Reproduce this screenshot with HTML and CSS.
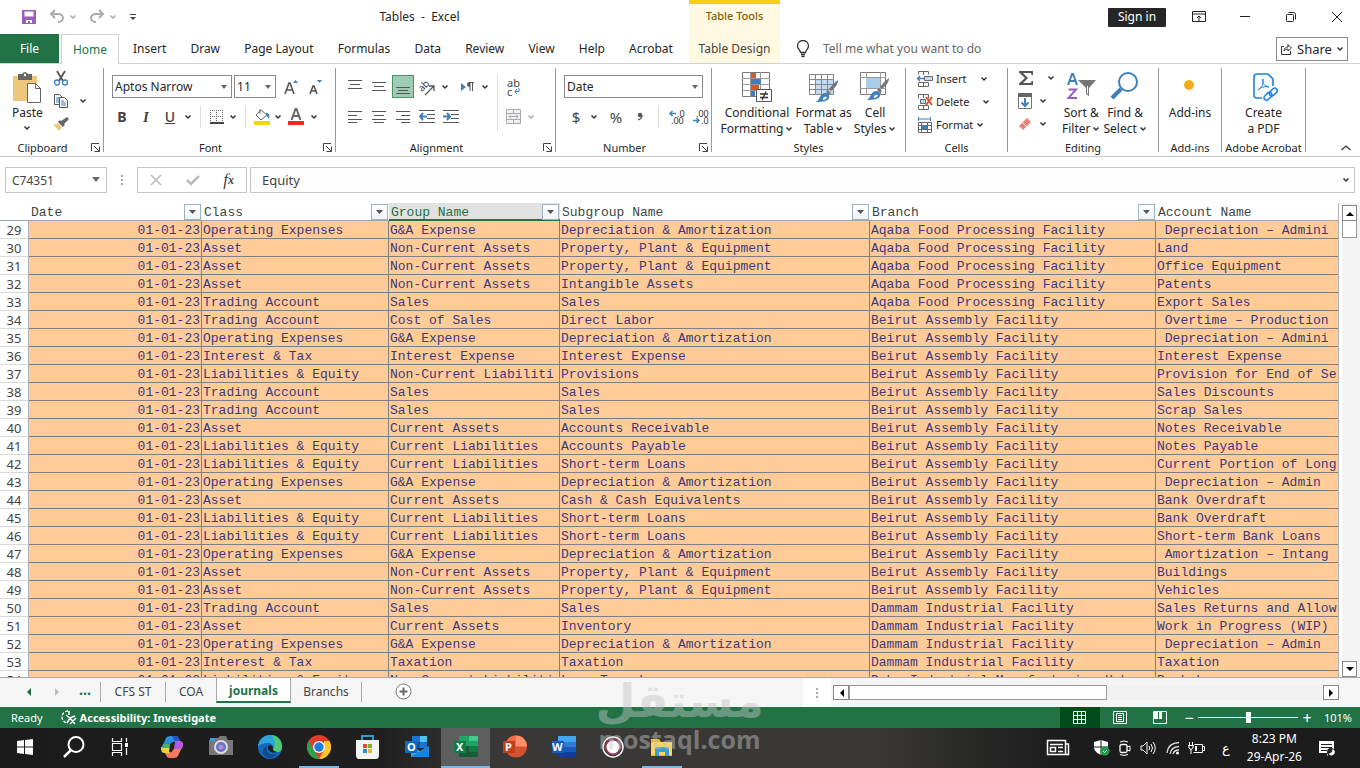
FILE: index.html
```html
<!DOCTYPE html>
<html lang="en">
<head>
<meta charset="utf-8">
<title>Tables - Excel</title>
<link rel="stylesheet" href="styles.css">
</head>
<body>
<svg class="defs" aria-hidden="true">
  <symbol id="chev" viewBox="0 0 8 8"><path d="M1.5 2.5 4 5l2.500-2.500" fill="none" stroke="currentColor" stroke-width="1.500"/></symbol>
  <symbol id="launch" viewBox="0 0 9 9"><path d="M.5 8V.5H8M3 3l5 5M8.500 3.500v5h-5" fill="none" stroke="#444"/></symbol>
  <symbol id="brush" viewBox="0 0 24 24"><path d="M23 1c0 4-3 8-7 11l-2-2C17 6 20 3 23 1z" fill="#777"/><path d="m13 11 3 3-2 2-3-3z" fill="#777"/><path d="M10 14c3 0 5 2 4 5-1 3-6 4-13 4 4-2 3-8 9-9z" fill="#3f7fbe"/><path d="M8 19c2-2 4-1 4-1s-1 3-4 3z" fill="#fff"/></symbol>
</svg>

<header class="top">
  <div class="title-left">
    <div class="qat">
      <button class="btn" aria-label="Save"><svg width="16" height="16"><path d="M1 1h14v14H1z" fill="#9a5fb9"/><path d="M3.500 2.500h9v5h-9zM5 11h6v3H5z" fill="#fff"/><path d="M7 12h2v2H7z" fill="#9a5fb9"/></svg></button>
      <button class="btn dim" aria-label="Undo"><svg width="16" height="16"><path d="M6 1 2 5l4 4M2 5h7c3 0 5 2 5 4s-2 4-5 4" fill="none" stroke="#aaa" stroke-width="2"/></svg><svg class="chev"><use href="#chev"/></svg></button>
      <button class="btn dim" aria-label="Redo"><svg width="16" height="16"><path d="m10 1 4 4-4 4M14 5H7C4 5 2 7 2 9s2 4 5 4" fill="none" stroke="#aaa" stroke-width="2"/></svg><svg class="chev"><use href="#chev"/></svg></button>
      <button class="btn" aria-label="Customize"><svg width="8" height="8"><path d="M1 1.500h6" stroke="#444"/><path d="M1 4h6L4 7z" fill="#444"/></svg></button>
    </div>
    <h1 class="doc-title">Tables&nbsp; -&nbsp; Excel</h1>
  </div>
  <div class="ctx-title">Table Tools</div>
  <div class="win">
    <button class="signin">Sign in</button>
    <button class="btn win-btn" aria-label="Ribbon options"><svg width="14" height="12"><path d="M.5.500h13v10H.5zM.5 3h13M7 10V5M5 7l2-2 2 2" fill="none" stroke="#222"/></svg></button>
    <button class="btn win-btn" aria-label="Minimize"><svg width="12" height="12"><path d="M1 5.500h10" stroke="#222"/></svg></button>
    <button class="btn win-btn" aria-label="Restore"><svg width="12" height="12"><rect x="1.500" y="3.500" width="7" height="7" rx="1" fill="none" stroke="#222"/><path d="M3.500 1.500h5q2 0 2 2v5" fill="none" stroke="#222"/></svg></button>
    <button class="btn win-btn" aria-label="Close"><svg width="12" height="12"><path d="m1 1 10 10M11 1 1 11" stroke="#222"/></svg></button>
  </div>
  <nav class="tabs">
    <a class="file" href="#file">File</a>
    <a class="home" href="#home">Home</a>
    <div class="tab-list"><a href="#insert">Insert</a><a href="#draw">Draw</a><a href="#layout">Page Layout</a><a href="#formulas">Formulas</a><a href="#data">Data</a><a href="#review">Review</a><a href="#view">View</a><a href="#help">Help</a><a href="#acrobat">Acrobat</a></div>
  </nav>
  <a class="ctx-tab" href="#design">Table Design</a>
  <div class="tell">
    <svg width="14" height="18"><path d="M4.500 12.500C4.500 10 1.500 9 1.500 6a5.500 5.500 0 0 1 11 0c0 3-3 4-3 6.500zM5 14.500h4M5.500 16.500h3" fill="none" stroke="#333" stroke-width="1.300"/></svg>
    <input class="tell-input" type="text" aria-label="Tell me" placeholder="Tell me what you want to do">
    <button class="share"><svg width="13" height="12"><path d="M4 3.500H1.500v8h9V8M4 8c0-3 2-4 4-4V1.500L11.500 5 8 8V6C6 6 5 7 4 8z" fill="none" stroke="#333"/></svg>Share<svg class="chev"><use href="#chev"/></svg></button>
  </div>
</header>

<main class="ribbon">
  <section class="group g-clip">
    <div class="body clip-body">
      <button class="big"><svg width="30" height="32"><path d="M1 4h24v25H1z" fill="#eec77c"/><path d="M6 2h4c1-2.500 5-2.500 6 0h4v6H6z" fill="#666"/><circle cx="13" cy="3" r="1.200" fill="#fff"/><path d="M15.500 11.500h8l5 5v14h-13z" fill="#fff" stroke="#666"/><path d="M23.500 11.500v5h5" fill="none" stroke="#666"/></svg><span>Paste</span><svg class="chev"><use href="#chev"/></svg></button>
      <div class="stack">
        <button class="btn" aria-label="Cut"><svg width="16" height="16"><path d="m4 1 6 10M12 1 6 11" stroke="#555" stroke-width="1.800"/><circle cx="4" cy="12.500" r="2.500" fill="none" stroke="#3f7fbe" stroke-width="1.300"/><circle cx="12" cy="12.500" r="2.500" fill="none" stroke="#3f7fbe" stroke-width="1.300"/></svg></button>
        <button class="btn copy" aria-label="Copy"><svg width="16" height="16"><path d="M1.500 1.500h5l3 3v7h-8z" fill="#fff" stroke="#555"/><path d="M3 5h4M3 7h4M3 9h3" stroke="#3f7fbe"/><path d="M6.500 4.500h5l3 3v7h-8z" fill="#fff" stroke="#555"/><path d="M8 8h3M8 10h5M8 12h5" stroke="#3f7fbe"/></svg><svg class="chev"><use href="#chev"/></svg></button>
        <button class="btn" aria-label="Format painter"><svg width="16" height="16"><path d="m14 1 2 2-5 5-3-3zM7 4l5 5-2 2-5-5z" fill="#666"/><path d="m5 7 4 4-3 4L0 8c2 1 3 0 5-1z" fill="#eec77c"/></svg></button>
      </div>
    </div>
    <div class="label">Clipboard<svg class="launch"><use href="#launch"/></svg></div>
  </section>

  <section class="group g-font">
    <div class="body">
      <div class="row">
        <span class="combo c-face"><select aria-label="Font"><option>Aptos Narrow</option></select></span>
        <span class="combo c-size"><select aria-label="Font size"><option>11</option></select></span>
        <button class="btn w24" aria-label="Grow font"><svg width="14" height="16"><path d="m1 15 4-11h1l4 11M2.500 11h6" fill="none" stroke="#555" stroke-width="1.600"/><path d="m9 4 2.500-3L14 4z" fill="#3f7fbe"/></svg></button>
        <button class="btn w24" aria-label="Shrink font"><svg width="14" height="16"><path d="m2 15 3-8h1l3 8M3 12h5" fill="none" stroke="#555" stroke-width="1.600"/><path d="m9 1 2.500 3L14 1z" fill="#3f7fbe"/></svg></button>
      </div>
      <div class="row r2">
        <button class="btn w24 fmt"><b>B</b></button>
        <button class="btn w24 fmt serif"><i>I</i></button>
        <button class="btn w24 fmt strong-u"><u>U</u></button>
        <svg class="chev"><use href="#chev"/></svg><span class="sep"></span>
        <button class="btn w20" aria-label="Borders"><svg width="14" height="14"><path d="M.5 0v13M6.500 0v13M12.500 0v13M0 .5h13M0 6.500h13" stroke="#666" stroke-dasharray="1 1"/><path d="M0 13h14" stroke="#444" stroke-width="2"/></svg></button>
        <svg class="chev"><use href="#chev"/></svg><span class="sep"></span>
        <button class="btn w20" aria-label="Fill color"><svg width="17" height="17"><path d="m7 2 6 5-6 5-5-5z" fill="#fff" stroke="#666"/><path d="M6 6V1" stroke="#666"/><path d="M12 5c3 0 4 2 3 6-1-2-2-2-3-4z" fill="#3f7fbe"/><path d="M0 13h16v4H0z" fill="#f7cf17"/></svg></button>
        <svg class="chev"><use href="#chev"/></svg>
        <button class="btn w24" aria-label="Font color"><svg width="16" height="17"><path d="m3.500 12 4-11h1l4 11M5 8h6" fill="none" stroke="#666" stroke-width="2"/><path d="M0 13h16v4H0z" fill="#ee2a1b"/></svg></button>
        <svg class="chev"><use href="#chev"/></svg>
      </div>
    </div>
    <div class="label">Font<svg class="launch"><use href="#launch"/></svg></div>
  </section>

  <section class="group g-align">
    <div class="body align-body">
      <div class="align-left">
        <div class="row">
          <button class="btn w24" aria-label="Top align"><svg width="14" height="16"><path d="M0 1.500h14M2 5.500h10M0 9.500h14" stroke="#555"/></svg></button>
          <button class="btn w24" aria-label="Middle align"><svg width="14" height="16"><path d="M0 3.500h14M2 7.500h10M0 11.500h14" stroke="#555"/></svg></button>
          <button class="btn on" aria-label="Bottom align"><svg width="14" height="16"><path d="M0 8.500h14M2 11.500h10M0 14.500h14" stroke="#555"/></svg></button>
          <button class="btn w24" aria-label="Orientation"><svg width="20" height="18"><text x="1" y="11" class="ic-ab" transform="rotate(-45 7 8)">ab</text><path d="M8 17 17 8M12 8h5v5" fill="none" stroke="#555" stroke-width="1.300"/></svg></button>
          <svg class="chev"><use href="#chev"/></svg>
          <button class="btn w24 rtl" aria-label="Text direction"><svg width="14" height="12"><path d="m1 2 5 4-5 4z" fill="#3f7fbe"/><path d="M10 1v9M12.500 1v9M14 1.500H9" stroke="#555" fill="none"/><path d="M10 1c-4 0-4 5 0 5z" fill="#555"/></svg></button>
          <svg class="chev"><use href="#chev"/></svg>
        </div>
        <div class="row r2">
          <button class="btn w24" aria-label="Align left"><svg width="14" height="12"><path d="M0 .5h14M0 4.500h9M0 8.500h14M0 11.500h9" stroke="#555"/></svg></button>
          <button class="btn w24" aria-label="Center"><svg width="14" height="12"><path d="M0 .5h14M2 4.500h10M0 8.500h14M2 11.500h10" stroke="#555"/></svg></button>
          <button class="btn w24" aria-label="Align right"><svg width="14" height="12"><path d="M0 .5h14M5 4.500h9M0 8.500h14M5 11.500h9" stroke="#555"/></svg></button>
          <button class="btn w24" aria-label="Decrease indent"><svg width="16" height="13"><path d="M0 .5h16M8 4.500h8M8 8.500h8M0 12.500h16" stroke="#555"/><path d="m4 3-3 3.500L4 10M1 6.500h7" fill="none" stroke="#3f7fbe" stroke-width="2"/></svg></button>
          <button class="btn w24" aria-label="Increase indent"><svg width="16" height="13"><path d="M0 .5h16M8 4.500h8M8 8.500h8M0 12.500h16" stroke="#555"/><path d="m4 3 3 3.500L4 10M7 6.500H0" fill="none" stroke="#3f7fbe" stroke-width="2"/></svg></button>
        </div>
      </div>
      <span class="sep tall"></span>
      <div class="align-right">
        <div class="row"><button class="btn w24 wrap" aria-label="Wrap text"><span>ab</span><span>c<svg width="6" height="6"><path d="M5 0v3.500H1M3 1 1 3.500 3 6" fill="none" stroke="#3f7fbe"/></svg></span></button></div>
        <div class="row r2"><button class="btn w24" aria-label="Merge"><svg width="15" height="15"><path d="M.5.500h14v14H.5zM0 4.500h15M0 10.500h15M7.500 0v4M7.500 11v4M3 7.500h9M5 5.500l-2 2 2 2M10 5.500l2 2-2 2" fill="#f4eff6" stroke="#aaa"/></svg></button><svg class="chev dim far"><use href="#chev"/></svg></div>
      </div>
    </div>
    <div class="label">Alignment<svg class="launch"><use href="#launch"/></svg></div>
  </section>

  <section class="group g-num">
    <div class="body">
      <div class="row"><span class="combo c-num"><select aria-label="Number format"><option>Date</option></select></span></div>
      <div class="row r2">
        <button class="btn w24 sym">$</button><svg class="chev"><use href="#chev"/></svg>
        <button class="btn w24 sym pc">%</button>
        <button class="btn w24" aria-label="Comma style"><svg width="6" height="9"><circle cx="3" cy="3" r="2.200" fill="#555"/><path d="M5 3c0 3-1 4-4 5" fill="none" stroke="#555" stroke-width="1.300"/></svg></button>
        <span class="sep"></span>
        <button class="btn w24" aria-label="Increase decimal"><svg width="18" height="16"><text x="9" y="8" class="ic-dec">.0</text><text x="3" y="15" class="ic-dec">.00</text><path d="M8 4.500H2M4.500 2 2 4.500 4.500 7" fill="none" stroke="#3f7fbe" stroke-width="1.500"/></svg></button>
        <button class="btn w24" aria-label="Decrease decimal"><svg width="18" height="16"><text x="4" y="8" class="ic-dec">.00</text><text x="9" y="15" class="ic-dec">.0</text><path d="M1 11.500h6M4.500 9 7 11.500 4.500 14" fill="none" stroke="#3f7fbe" stroke-width="1.500"/></svg></button>
      </div>
    </div>
    <div class="label">Number<svg class="launch"><use href="#launch"/></svg></div>
  </section>

  <section class="group g-styles">
    <div class="body bigs">
      <button class="big"><svg width="30" height="32"><path d="M.5.500h27v24H.5z" fill="#fff" stroke="#777"/><path d="M0 6.500h28M0 12.500h28M0 18.500h28M8.500 0v25M18.500 0v25" stroke="#999"/><path d="M9 1h5v5H9zM9 13h8v5H9z" fill="#d05b31"/><path d="M9 7h10v5H9zM9 19h4v5H9z" fill="#3f7fbe"/><path d="M14.500 17.500h15v12h-15z" fill="#fff" stroke="#555"/><path d="M18 22h8M18 25.500h8M24 19.500l-4 8.500" stroke="#333" stroke-width="1.300"/></svg><span>Conditional</span><span>Formatting<svg class="chev"><use href="#chev"/></svg></span></button>
      <button class="big"><svg width="30" height="32"><path d="M.5 2.500h24v20H.5z" fill="#fff"/><path d="M7 8h18v15H7z" fill="#c2dcf1"/><path d="M.5 2.500h24v20H.5zM0 7.500h25M0 12.500h25M0 17.500h25M6.500 2v21M12.500 2v21M18.500 2v21" fill="none" stroke="#888"/><use href="#brush" x="6" y="7" width="24" height="24"/></svg><span>Format as</span><span>Table<svg class="chev"><use href="#chev"/></svg></span></button>
      <button class="big"><svg width="30" height="32"><path d="M.5.500h25v22H.5z" fill="#fff" stroke="#777"/><path d="M0 5.500h26M0 16.500h26M6.500 0v23M20.500 0v23" stroke="#999"/><path d="M6 6h14v10H6z" fill="#a9cdea"/><use href="#brush" x="6" y="5" width="24" height="24"/></svg><span>Cell</span><span>Styles<svg class="chev"><use href="#chev"/></svg></span></button>
    </div>
    <div class="label">Styles</div>
  </section>

  <section class="group g-cells">
    <div class="body stack3">
      <button class="line"><svg width="16" height="16"><path d="M1.500 3.500v-3h10v3M6.500 0v4M1.500 11.500h10v4h-10zM6.500 11v5" fill="none" stroke="#666"/><path d="M7.500 5.500h8v4h-8z" fill="#c2dcf1" stroke="#666"/><path d="M7 7.500H0M3 5 .5 7.500 3 10" fill="none" stroke="#3f7fbe" stroke-width="1.500"/></svg><span>Insert</span><svg class="chev far"><use href="#chev"/></svg></button>
      <button class="line"><svg width="16" height="16"><path d="M1.500 4.500v-4h10v4M6.500 0v4M1.500 11.500h10v4h-10zM6.500 11v5" fill="none" stroke="#666"/><path d="M3.500 5.500h5v4h-5z" fill="#c2dcf1" stroke="#666"/><path d="m9 3 6 8M15 3 9 11" stroke="#d9532c" stroke-width="2"/></svg><span>Delete</span><svg class="chev far"><use href="#chev"/></svg></button>
      <button class="line"><svg width="16" height="16"><path d="M1.500 0v4M13.500 0v4M2 2h11" stroke="#3f7fbe"/><path d="M1.500 5.500h13v10h-13zM1 8.500h14M1 12.500h14M4.500 5v11M10.500 5v11" fill="none" stroke="#666"/><path d="M5 8h5v4H5z" fill="#3f7fbe"/></svg><span>Format</span><svg class="chev"><use href="#chev"/></svg></button>
    </div>
    <div class="label">Cells</div>
  </section>

  <section class="group g-edit">
    <div class="body edit-body">
      <div class="stack3 edit-stack">
        <button class="line" aria-label="AutoSum"><svg width="16" height="16"><path d="M1 1h14v4h-1.500l-.5-2H5l5 5-5 5h8l.5-2H15v4H1v-1.500L7 8 1 2.500z" fill="#555"/></svg><svg class="chev far"><use href="#chev"/></svg></button>
        <button class="line" aria-label="Fill"><svg width="14" height="16"><path d="M.5.500h13v15H.5z" fill="#fff" stroke="#777"/><path d="M0 0h14v4H0z" fill="#666"/><path d="M7 5v8M3.500 9.500 7 13l3.500-3.500" fill="none" stroke="#3f7fbe" stroke-width="2"/></svg><svg class="chev mid"><use href="#chev"/></svg></button>
        <button class="line" aria-label="Clear"><svg width="14" height="14"><path d="m9 1 4 4-8 8-4-4z" fill="#ee8073"/><path d="m4.500 5.500 4 4" stroke="#fff"/></svg><svg class="chev mid"><use href="#chev"/></svg></button>
      </div>
      <button class="big sort"><svg width="30" height="32"><path d="m2 13 4-11h1l4 11M3 9h7" fill="none" stroke="#3f7fbe" stroke-width="2"/><path d="M2.500 17.500H10L2.500 26H11" fill="none" stroke="#9a5fb9" stroke-width="2"/><path d="M12 8h18l-7 8v8l-3-2v-6z" fill="#777"/><path d="M21 14v7l1 1v-8z" fill="#fff"/></svg><span>Sort &amp;</span><span>Filter<svg class="chev"><use href="#chev"/></svg></span></button>
      <button class="big"><svg width="30" height="32"><circle cx="18" cy="10" r="9" fill="none" stroke="#3f7fbe" stroke-width="2"/><path d="M11 17 2 26" stroke="#3f7fbe" stroke-width="4"/></svg><span>Find &amp;</span><span>Select<svg class="chev"><use href="#chev"/></svg></span></button>
    </div>
    <div class="label">Editing</div>
  </section>

  <section class="group g-add">
    <div class="body bigs"><button class="big"><svg width="30" height="32"><circle cx="14" cy="13" r="5" fill="#f5ac1d"/></svg><span>Add-ins</span></button></div>
    <div class="label">Add-ins</div>
  </section>
  <section class="group g-pdf">
    <div class="body bigs"><button class="big"><svg width="30" height="32"><path d="M13 26H8q-3 0-3-3V5q0-3 3-3h11l5 5v7" fill="none" stroke="#1b7fe0" stroke-width="1.600"/><path d="M9 18c4-3 6-6 5-11-2 3 1 7 6 8-4-1-8 0-11 3z" fill="none" stroke="#1b7fe0"/><g fill="none" stroke="#1b7fe0" stroke-width="1.500"><rect x="15" y="22" width="9" height="5" rx="2.500" transform="rotate(-45 19 25)"/><rect x="20" y="17" width="9" height="5" rx="2.500" transform="rotate(-45 25 20)"/></g></svg><span>Create</span><span>a PDF</span></button></div>
    <div class="label">Adobe Acrobat</div>
  </section>
  <button class="btn collapse" aria-label="Collapse ribbon"><svg width="12" height="8"><path d="m1.500 6 4.500-4 4.500 4" fill="none" stroke="#333" stroke-width="1.300"/></svg></button>
</main>

<div class="fbar">
  <span class="namebox"><input type="text" aria-label="Name box" value="C74351"></span>
  <svg class="dots" width="4" height="12"><path d="M1 1h2v2H1zM1 5h2v2H1zM1 9h2v2H1z" fill="#aaa"/></svg>
  <div class="fbtns">
    <button class="btn" aria-label="Cancel"><svg width="12" height="12"><path d="m1 1 10 10M11 1 1 11" stroke="#bbb" stroke-width="1.600"/></svg></button>
    <button class="btn" aria-label="Enter"><svg width="14" height="12"><path d="m1 6 4 4 8-8" fill="none" stroke="#bbb" stroke-width="2.500"/></svg></button>
    <button class="btn fx"><i>f</i><small>x</small></button>
  </div>
  <div class="formula"><input type="text" aria-label="Formula" value="Equity"><svg class="chev"><use href="#chev"/></svg></div>
</div>

<div class="sheet">
  <div class="cells">
  <table class="grid">
    <colgroup><col class="k0"><col class="k1"><col class="k2"><col class="k3"><col class="k4"><col class="k5"><col class="k6"></colgroup>
    <thead><tr><th></th>
      <th><div class="hd"><span>Date</span><button class="flt" aria-label="Filter Date"></button></div></th>
      <th><div class="hd"><span>Class</span><button class="flt" aria-label="Filter Class"></button></div></th>
      <th class="sel"><div class="hd"><span>Group Name</span><button class="flt" aria-label="Filter Group Name"></button></div></th>
      <th><div class="hd"><span>Subgroup Name</span><button class="flt" aria-label="Filter Subgroup Name"></button></div></th>
      <th><div class="hd"><span>Branch</span><button class="flt" aria-label="Filter Branch"></button></div></th>
      <th><div class="hd"><span>Account Name</span></div></th></tr></thead>
    <tbody>
    <tr><th>29</th><td>01-01-23</td><td>Operating Expenses</td><td>G&amp;A Expense</td><td>Depreciation &amp; Amortization</td><td>Aqaba Food Processing Facility</td><td> Depreciation – Admini</td></tr>
    <tr><th>30</th><td>01-01-23</td><td>Asset</td><td>Non-Current Assets</td><td>Property, Plant &amp; Equipment</td><td>Aqaba Food Processing Facility</td><td>Land</td></tr>
    <tr><th>31</th><td>01-01-23</td><td>Asset</td><td>Non-Current Assets</td><td>Property, Plant &amp; Equipment</td><td>Aqaba Food Processing Facility</td><td>Office Equipment</td></tr>
    <tr><th>32</th><td>01-01-23</td><td>Asset</td><td>Non-Current Assets</td><td>Intangible Assets</td><td>Aqaba Food Processing Facility</td><td>Patents</td></tr>
    <tr><th>33</th><td>01-01-23</td><td>Trading Account</td><td>Sales</td><td>Sales</td><td>Aqaba Food Processing Facility</td><td>Export Sales</td></tr>
    <tr><th>34</th><td>01-01-23</td><td>Trading Account</td><td>Cost of Sales</td><td>Direct Labor</td><td>Beirut Assembly Facility</td><td> Overtime – Production</td></tr>
    <tr><th>35</th><td>01-01-23</td><td>Operating Expenses</td><td>G&amp;A Expense</td><td>Depreciation &amp; Amortization</td><td>Beirut Assembly Facility</td><td> Depreciation – Admini</td></tr>
    <tr><th>36</th><td>01-01-23</td><td>Interest &amp; Tax</td><td>Interest Expense</td><td>Interest Expense</td><td>Beirut Assembly Facility</td><td>Interest Expense</td></tr>
    <tr><th>37</th><td>01-01-23</td><td>Liabilities &amp; Equity</td><td>Non-Current Liabiliti</td><td>Provisions</td><td>Beirut Assembly Facility</td><td>Provision for End of Se</td></tr>
    <tr><th>38</th><td>01-01-23</td><td>Trading Account</td><td>Sales</td><td>Sales</td><td>Beirut Assembly Facility</td><td>Sales Discounts</td></tr>
    <tr><th>39</th><td>01-01-23</td><td>Trading Account</td><td>Sales</td><td>Sales</td><td>Beirut Assembly Facility</td><td>Scrap Sales</td></tr>
    <tr><th>40</th><td>01-01-23</td><td>Asset</td><td>Current Assets</td><td>Accounts Receivable</td><td>Beirut Assembly Facility</td><td>Notes Receivable</td></tr>
    <tr><th>41</th><td>01-01-23</td><td>Liabilities &amp; Equity</td><td>Current Liabilities</td><td>Accounts Payable</td><td>Beirut Assembly Facility</td><td>Notes Payable</td></tr>
    <tr><th>42</th><td>01-01-23</td><td>Liabilities &amp; Equity</td><td>Current Liabilities</td><td>Short-term Loans</td><td>Beirut Assembly Facility</td><td>Current Portion of Long</td></tr>
    <tr><th>43</th><td>01-01-23</td><td>Operating Expenses</td><td>G&amp;A Expense</td><td>Depreciation &amp; Amortization</td><td>Beirut Assembly Facility</td><td> Depreciation – Admin</td></tr>
    <tr><th>44</th><td>01-01-23</td><td>Asset</td><td>Current Assets</td><td>Cash &amp; Cash Equivalents</td><td>Beirut Assembly Facility</td><td>Bank Overdraft</td></tr>
    <tr><th>45</th><td>01-01-23</td><td>Liabilities &amp; Equity</td><td>Current Liabilities</td><td>Short-term Loans</td><td>Beirut Assembly Facility</td><td>Bank Overdraft</td></tr>
    <tr><th>46</th><td>01-01-23</td><td>Liabilities &amp; Equity</td><td>Current Liabilities</td><td>Short-term Loans</td><td>Beirut Assembly Facility</td><td>Short-term Bank Loans</td></tr>
    <tr><th>47</th><td>01-01-23</td><td>Operating Expenses</td><td>G&amp;A Expense</td><td>Depreciation &amp; Amortization</td><td>Beirut Assembly Facility</td><td> Amortization – Intang</td></tr>
    <tr><th>48</th><td>01-01-23</td><td>Asset</td><td>Non-Current Assets</td><td>Property, Plant &amp; Equipment</td><td>Beirut Assembly Facility</td><td>Buildings</td></tr>
    <tr><th>49</th><td>01-01-23</td><td>Asset</td><td>Non-Current Assets</td><td>Property, Plant &amp; Equipment</td><td>Beirut Assembly Facility</td><td>Vehicles</td></tr>
    <tr><th>50</th><td>01-01-23</td><td>Trading Account</td><td>Sales</td><td>Sales</td><td>Dammam Industrial Facility</td><td>Sales Returns and Allow</td></tr>
    <tr><th>51</th><td>01-01-23</td><td>Asset</td><td>Current Assets</td><td>Inventory</td><td>Dammam Industrial Facility</td><td>Work in Progress (WIP)</td></tr>
    <tr><th>52</th><td>01-01-23</td><td>Operating Expenses</td><td>G&amp;A Expense</td><td>Depreciation &amp; Amortization</td><td>Dammam Industrial Facility</td><td> Depreciation – Admin</td></tr>
    <tr><th>53</th><td>01-01-23</td><td>Interest &amp; Tax</td><td>Taxation</td><td>Taxation</td><td>Dammam Industrial Facility</td><td>Taxation</td></tr>
    <tr><th>54</th><td>01-01-23</td><td>Liabilities &amp; Equity</td><td>Non-Current Liabiliti</td><td>Long-Term Loans</td><td>Doha Industrial Manufacturing Hub</td><td>Bank Loans</td></tr>
    </tbody>
  </table>
  </div>
  <div class="vscroll">
    <button class="sb" aria-label="Scroll up"><svg width="8" height="5"><path d="m0 5 4-4 4 4z"/></svg></button>
    <div class="vthumb"></div>
    <button class="sb down" aria-label="Scroll down"><svg width="8" height="5"><path d="m0 0 4 4 4-4z"/></svg></button>
  </div>
</div>

<div class="sheetbar">
  <button class="btn nav" aria-label="Previous sheet"><svg width="6" height="8"><path d="M5 0v8L1 4z" fill="#1a6b3d"/></svg></button>
  <button class="btn nav" aria-label="Next sheet"><svg width="6" height="8"><path d="M1 0v8l4-4z" fill="#bbb"/></svg></button>
  <button class="btn nav more">...</button>
  <a class="stab s1" href="#cfs">CFS ST</a><a class="stab s2" href="#coa">COA</a><a class="stab active" href="#journals">journals</a><a class="stab s4" href="#branchs">Branchs</a>
  <button class="btn plus" aria-label="New sheet"><svg width="17" height="17"><circle cx="8.500" cy="8.500" r="7.500" fill="#fff" stroke="#777"/><path d="M8.500 4.500v8M4.500 8.500h8" stroke="#666" stroke-width="2"/></svg></button>
  <div class="splitter"><svg width="4" height="12"><path d="M1 1h2v2H1zM1 5h2v2H1zM1 9h2v2H1z" fill="#aaa"/></svg></div>
  <div class="hscroll">
    <button class="sb" aria-label="Scroll left"><svg width="5" height="8"><path d="M5 0v8L1 4z"/></svg></button>
    <div class="hthumb"></div>
    <button class="sb right" aria-label="Scroll right"><svg width="5" height="8"><path d="M0 0v8l4-4z"/></svg></button>
  </div>
</div>

<footer class="status">
  <span class="ready">Ready</span>
  <svg width="17" height="15"><path d="M7 1a6 6 0 1 0 0 12" fill="none" stroke="#fff" stroke-dasharray="3 1.500" stroke-width="1.300"/><path d="M8 1v4M5 5l4 3 5-2M9 8l-3 5M9 8l5 6M15 8l-6 6" fill="none" stroke="#fff" stroke-width="1.500"/></svg>
  <strong class="acc">Accessibility: Investigate</strong>
  <button class="btn view on-view" aria-label="Normal"><svg width="13" height="13"><path d="M.5.500h12v12H.5zM0 4.500h13M0 8.500h13M4.500 0v13M8.500 0v13" fill="none" stroke="#fff"/></svg></button>
  <button class="btn view" aria-label="Page layout"><svg width="14" height="13"><path d="M.5.500h13v12H.5zM3.500 2.500h7v8h-7zM5 4.500h4M5 6.500h4M5 8.500h4" fill="none" stroke="#fff"/></svg></button>
  <button class="btn view" aria-label="Page break"><svg width="14" height="13"><path d="M.5.500h13v12H.5z" fill="none" stroke="#fff"/><path d="M1 1h4v7H1zM6 1h3v7H6z" fill="#fff"/></svg></button>
  <button class="btn zm">−</button>
  <input class="zoom" type="range" min="0" max="200" value="101" aria-label="Zoom">
  <button class="btn zm">+</button>
  <span class="pct">101%</span>
</footer>

<div class="taskbar">
  <button class="app" aria-label="Start"><svg width="18" height="18"><path d="m1 3 7-1v6.500H1zM9 2l8-1v7.500H9zM1 9.500h7V16l-7-1zM9 9.500h8V17l-8-1z" fill="#fff"/></svg></button>
  <button class="app" aria-label="Search"><svg width="24" height="24"><circle cx="14" cy="9.500" r="7.500" fill="none" stroke="#fff" stroke-width="2"/><path d="m9 15-7 7" stroke="#fff" stroke-width="2.500"/></svg></button>
  <button class="app tv" aria-label="Task view"><svg width="18" height="18"><path d="M1.500 0v3.500h9V0M1.500 5.500h9v7h-9zM1.500 18v-3.500h9V18M15.500 0v4M15.500 10v7" fill="none" stroke="#fff" stroke-width="1.200"/><path d="M14 5h3v4h-3z" fill="#fff"/></svg></button>
  <button class="app" aria-label="Copilot"><svg width="24" height="24"><path d="M6 3q1-2 4-2h6q2 0 3 3l1 2h-4q-3 0-4 4l-2 8H4q-3 0-3-4z" fill="#2b8fdc"/><path d="M1 12q0 5 3 6h6l2-7z" fill="#f2cf37"/><path d="M3 9h9l-1 4H2z" fill="#46b36b"/><path d="M12 1h4q2 0 3 3l1 2h-5z" fill="#2157c8"/><path d="M18 21q-1 2-4 2H9q-2 0-3-3l-1-2h4q3 0 4-4l2-8h4q4 0 4 4z" fill="#f57b62"/><path d="M15 6h4q4 0 4 4l-1 4h-9z" fill="#b65be0"/><path d="m10 9 3-2h2l-1 7-3 3H9z" fill="#242322"/></svg></button>
  <button class="app" aria-label="Camera"><svg width="24" height="24"><path d="M0 5h5V3h4l2-2h6l2 4h5v15H0z" fill="#777"/><path d="M1 3h5v3H1z" fill="#3f9bdc"/><circle cx="12" cy="12" r="7" fill="#ddd"/><circle cx="12" cy="12" r="5" fill="#6173c8"/><circle cx="12" cy="12" r="2.500" fill="#b68bdc"/></svg></button>
  <button class="app" aria-label="Edge"><svg width="24" height="24"><circle cx="12" cy="12" r="12" fill="#1769bd"/><path d="M0 12A12 12 0 0 1 24 12c0 3-2 5-5 5-3 0-4-1-4-3 2-1 0-6-5-6C5 8 1 10 0 12z" fill="#2ba5dc"/><path d="M14 0c7 1 10 6 10 12 0 3-2 5-5 5-3 0-4-1-4-3 3-4 2-9-1-14z" fill="#4ccc76"/><path d="M9 11c-2 6 3 10 10 8-2 4-7 5-11 3-5-3-4-9 1-11z" fill="#13478e"/><path d="M10 11c3-2 5 0 5 2s0 3 4 4c-6 2-10-2-9-6z" fill="#1d1d1d"/></svg></button>
  <button class="app running" aria-label="Chrome"><svg width="24" height="24"><circle cx="12" cy="12" r="12" fill="#e33b2e"/><path d="M1.600 6 8 17l4 7A12 12 0 0 1 1.600 6z" fill="#2ba24c"/><path d="M12 24 17 15V6h5.400A12 12 0 0 1 12 24z" fill="#fbc72c"/><circle cx="12" cy="12" r="6" fill="#fff"/><circle cx="12" cy="12" r="4.700" fill="#217ddd"/></svg></button>
  <button class="app" aria-label="Store"><svg width="24" height="24"><path d="M6 8V1h11v7" fill="none" stroke="#2b9ddc" stroke-width="2"/><path d="M0 5h23v15q0 4-3 4H3q-3 0-3-4z" fill="#f4f4f4"/><path d="M7 9h4v4H7z" fill="#e34b2e"/><path d="M12 9h4v4h-4z" fill="#7dae2c"/><path d="M7 14h4v4H7z" fill="#2b8fdc"/><path d="M12 14h4v4h-4z" fill="#f5b52c"/></svg></button>
  <button class="app" aria-label="Outlook"><svg width="24" height="24"><path d="M7 1h15v12H7z" fill="#1a73cc"/><path d="M15 1h7v6h-7z" fill="#4fc0ee"/><path d="M7 7h8v6H7z" fill="#1255a6"/><path d="M6 11l9 5 9-5v11H6z" fill="#33a4e8"/><path d="m6 22 18-11v11z" fill="#1d83d4"/><path d="M0 6h12v12H0z" fill="#0f6cbd"/><text x="2" y="16" class="ic-app">O</text></svg></button>
  <button class="app current" aria-label="Excel"><svg width="24" height="24"><path d="M5 1h19v21H5z" fill="#21a366"/><path d="M15 1h9v5h-9z" fill="#3fcd86"/><path d="M5 11h10v11H5z" fill="#185c37"/><path d="M15 11h9v6h-9z" fill="#107c41"/><path d="M15 17h9v5h-9z" fill="#185c37"/><path d="M0 6h12v12H0z" fill="#107c41"/><text x="2" y="16" class="ic-app">X</text></svg></button>
  <button class="app" aria-label="PowerPoint"><svg width="24" height="24"><circle cx="13" cy="11.500" r="11" fill="#d35230"/><path d="M13 .5a11 11 0 0 1 11 11H13z" fill="#ff8f6b"/><path d="M2 11.500A11 11 0 0 1 13 .5v11z" fill="#ed6c47"/><path d="M0 6h12v12H0z" fill="#c43e1c"/><text x="2" y="16" class="ic-app">P</text></svg></button>
  <button class="app" aria-label="Word"><svg width="24" height="24"><path d="M6 1h18v6H6z" fill="#41a5ee"/><path d="M6 7h18v5H6z" fill="#2b7cd3"/><path d="M6 12h18v5H6z" fill="#185abd"/><path d="M6 17h18v5H6z" fill="#103f91"/><path d="M0 6h12v12H0z" fill="#185abd"/><text x="0" y="16" class="ic-app">W</text></svg></button>
  <button class="app" aria-label="Recorder"><svg width="24" height="24"><circle cx="12" cy="12" r="10" fill="#333" stroke="#fff" stroke-width="1.500"/><circle cx="12" cy="12" r="7.500" fill="#fff" stroke="#8b3a5a" stroke-width="2"/></svg></button>
  <button class="app running" aria-label="File Explorer"><svg width="24" height="24"><path d="M1 4h8l2 3h11v14H1z" fill="#f5b81c"/><path d="M3 7h19v13H1V9z" fill="#fbd662"/><path d="M5 14q0-2 2-2h10q2 0 2 2v7h-4v-4h-6v4H5z" fill="#3f9bdc"/></svg></button>
  <div class="tray">
    <svg width="24" height="18"><path d="M1.500 1.500h18v14h-18zM20 5h2.500v10.500H19M4.500 8.500h5v4h-5zM4 5.500h13M12 8.500h5M12 12.500h5" fill="none" stroke="#fff" stroke-width="1.500"/></svg>
    <svg class="t1" width="16" height="16"><path d="m7 0 7 2v5c0 4-3 6-7 8-4-2-7-4-7-8V2z" fill="#fff"/><path d="M7 0v15M0 7h14" stroke="#222"/><circle cx="11" cy="11" r="4.500" fill="#1f9e4c"/><path d="m9 11 1.500 1.500L13 10" fill="none" stroke="#fff"/></svg>
    <svg width="14" height="16"><rect x="2" y="4.500" width="7" height="8" rx="1.500" fill="none" stroke="#fff" stroke-width="1.300"/><path d="m9 7 3-1v5l-3-1M2 2q4-2 8 0M2 14.500q4 2 8 0" fill="none" stroke="#fff"/></svg>
    <svg width="18" height="14"><path d="M1 5h2l4-4v12L3 9H1z" fill="none" stroke="#fff"/><path d="M9 5q1.500 2 0 4M11 3q3 4 0 8M13 1q4.500 6 0 12" fill="none" stroke="#fff"/></svg>
    <svg width="14" height="14"><path d="M1 12Q2 2 13 1.500M4 13q1-7 9-7.500M7 13q1-4 6-4" fill="none" stroke="#ddd" stroke-width="1.300"/><circle cx="11.500" cy="12" r="1.500" fill="#fff"/></svg>
    <svg width="17" height="13"><path d="M6.500 2.500h8v8h-9M15 4.500h1.500v4H15M1.500 0v3M4.500 0v3M0 3.500h6M1 4v2l2 1.500L5 6V4M3 7v5" fill="none" stroke="#fff"/><path d="M7 4h2v5H7z" fill="#fff"/></svg>
    <span class="lang">ع</span>
    <time class="clock"><span>8:23 PM</span><span>29-Apr-26</span></time>
    <svg width="18" height="17"><path d="M1 1h15v12h-4l-3 3v-3H1z" fill="#fff"/><path d="M3 4.500h11M3 7.500h11M3 10.500h6" stroke="#222"/><circle cx="13" cy="12" r="4" fill="#222"/><path d="M14.500 9a3.300 3.300 0 1 1-4 4.500c3 0 4-2 4-4.500z" fill="#fff"/></svg>
  </div>
</div>
<div class="mark" aria-hidden="true"><span class="mark-ar" lang="ar" dir="rtl">مستقل</span><span class="mark-en">mostaql.com</span></div>
</body>
</html>
```
FILE: styles.css
```css
* { box-sizing: border-box; }
body { margin: 0; height: 100vh; display: flex; flex-direction: column; overflow: hidden; background: #fff; color: #262626; font: 12px/16px "Noto Sans", "Open Sans", sans-serif; }
svg { display: block; flex: none; }
.defs { position: absolute; width: 0; height: 0; }
button, input, select { font: inherit; color: inherit; margin: 0; padding: 0; border: 0; background: none; border-radius: 0; }
a { color: inherit; text-decoration: none; }
.btn { display: flex; align-items: center; justify-content: center; flex: none; }
.chev { width: 8px; height: 8px; color: #333; }
.dim, .dim .chev { color: #aaa; }
.launch { width: 9px; height: 9px; }

/* title bar and tabs */
.top { flex: none; display: grid; grid-template-columns: 689px 91px 1fr; grid-template-rows: 34px 30px; }
.title-left { display: flex; align-items: center; }
.qat { width: 150px; display: flex; padding-left: 21px; gap: 12px; }
.qat .btn { gap: 4px; }
.doc-title { flex: 1; text-align: center; font-size: 12px; font-weight: 400; margin: 0; }
.ctx-title { background: #fff9e2; border-top: 4px solid #f7cf17; color: #806000; text-align: center; font-size: 11px; font-weight: 500; padding-top: 4px; }
.win { display: flex; align-items: center; justify-content: flex-end; }
.signin { background: #262626; color: #fff; width: 58px; height: 19px; border-radius: 1px; margin-right: 10px; }
.win-btn { width: 46px; height: 30px; }
.tabs { display: flex; border-bottom: 1px solid #d2d2d2; }
.file { width: 59px; background: #217346; color: #fff; display: grid; place-items: center; height: 29px; }
.home { width: 58px; margin: 0 14px -1px 2px; border: 1px solid #d2d2d2; border-bottom: 0; background: #fff; color: #217346; display: grid; place-items: center; }
.tab-list { width: 540px; display: flex; justify-content: space-between; align-items: center; }
.ctx-tab { background: #fff9e2; border-bottom: 1px solid #d2d2d2; color: #444; display: grid; place-items: center; }
.tell { display: flex; align-items: center; border-bottom: 1px solid #d2d2d2; padding: 0 12px 0 16px; }
.tell-input { flex: 1; margin-left: 13px; }
.tell-input::placeholder { color: #666; opacity: 1; }
.share { display: flex; align-items: center; justify-content: center; gap: 4px; width: 72px; height: 24px; border: 1px solid #8a8a8a; font-size: 13px; }

/* ribbon */
.ribbon { flex: none; display: flex; height: 93px; padding: 4px 0; border-bottom: 1px solid #c8c8c8; }
.group { flex: none; display: flex; flex-direction: column; border-right: 1px solid #999; height: 84px; }
.g-clip { width: 104px; } .g-font { width: 232px; } .g-align { width: 220px; } .g-num { width: 156px; }
.g-styles { width: 194px; } .g-cells { width: 102px; } .g-edit { width: 151px; } .g-add { width: 63px; } .g-pdf { width: 84px; }
.body { flex: 1; padding: 7px 8px 0; }
.label { position: relative; height: 12px; line-height: 16px; font-size: 11px; text-align: center; white-space: nowrap; display: flex; justify-content: center; padding-right: 18px; }
.g-styles .label, .g-cells .label, .g-edit .label, .g-add .label, .g-pdf .label { padding-right: 0; }
.label .launch { position: absolute; right: 3px; top: 3px; }
.row { display: flex; align-items: center; height: 23px; }
.r2 { margin-top: 7px; }
.w24 { width: 24px; height: 22px; } .w20 { width: 20px; height: 22px; }
.row .chev { margin: 0 2px; }
.sep { width: 1px; height: 22px; margin: 0 6px; background: #ddd; flex: none; }
.sep.tall { height: 56px; margin: 0 3px; }
.combo { position: relative; height: 23px; border: 1px solid #8a8a8a; }
.combo select { appearance: none; width: 100%; height: 21px; padding: 0 2px; line-height: 20px; }
.combo::after { content: ""; position: absolute; right: 4px; top: 9px; width: 6px; height: 4px; background: #666; clip-path: polygon(0 0, 100% 0, 50% 100%); pointer-events: none; }
.c-face { width: 123px; margin-left: 2px; } .c-size { width: 43px; margin: 0 3px 0 2px; } .c-num { width: 140px; }
.fmt { font-size: 14px; color: #444; } .serif { font-family: "Liberation Serif", serif; font-weight: 700; font-size: 15px; }
.strong-u { font-weight: 500; }
.g-font .body { padding-left: 6px; }
.align-body { display: flex; padding-left: 7px; }
.align-left { width: 151px; }
.on { width: 22px; height: 23px; margin: 0 1px; border: 1px solid #4a9468; background: #9fcdb3; }
.rtl { margin-left: 4px; }
.ic-ab { font: 10px "Noto Sans", sans-serif; fill: #444; }
.wrap { flex-direction: column; align-items: flex-start; padding-left: 6px; font-size: 11px; line-height: 9px; color: #444; }
.wrap span { display: flex; align-items: center; gap: 2px; }
.ic-dec { font: 9px "Noto Sans", sans-serif; fill: #333; }
.sym { font-size: 15px; color: #444; }
.pc { margin-left: 4px; }
.big { display: flex; flex-direction: column; align-items: center; white-space: nowrap; }
.big > svg:first-child { margin-bottom: 1px; }
.big span { display: flex; align-items: center; gap: 2px; }
.bigs { display: flex; justify-content: center; gap: 2px; padding: 4px 2px 0; }
.clip-body { display: flex; padding: 4px 12px 0; gap: 10px; }
.clip-body .big .chev { margin-top: 3px; }
.stack { display: flex; flex-direction: column; gap: 7px; align-items: flex-start; margin-top: -2px; }
.copy { gap: 10px; }
.stack3 { display: flex; flex-direction: column; gap: 7px; padding: 3px 0 0 11px; }
.line { display: flex; align-items: center; gap: 3px; height: 16px; font-size: 11px; }
.line .far { margin-left: 10px; }
.edit-body { display: flex; padding: 4px 0 0; }
.edit-stack { width: 54px; padding: 0 0 0 10px; margin-top: -2px; }
.line .mid { margin-left: 4px; }
.sort { margin-right: 3px; }
.collapse { margin: auto 8px 0 auto; }

/* formula bar */
.fbar { flex: none; display: flex; align-items: center; padding: 10px 5px; }
.namebox { position: relative; width: 102px; height: 26px; border: 1px solid #c6c6c6; }
.namebox input { width: 80px; height: 24px; padding-left: 6px; color: #444; }
.namebox::after { content: ""; position: absolute; right: 6px; top: 9px; width: 8px; height: 5px; background: #666; clip-path: polygon(0 0, 100% 0, 50% 100%); }
.dots { margin: 0 13px; }
.fbtns { display: flex; align-items: center; justify-content: space-between; width: 110px; height: 26px; padding: 0 12px; border: 1px solid #c6c6c6; }
.fx { font: 17px "Liberation Serif", serif; color: #444; } .fx small { font-size: 12px; font-style: italic; font-weight: 700; }
.formula { flex: 1; display: flex; align-items: center; height: 26px; margin-left: 3px; padding: 0 4px 0 11px; border: 1px solid #c6c6c6; background: #fdfdfd; }
.formula input { flex: 1; font-size: 13px; color: #444; }

/* worksheet */
.sheet { flex: 1; min-height: 0; display: flex; border-bottom: 1px solid #aaa; }
.cells { flex: 1; min-width: 0; overflow: hidden; border-right: 1px solid #aab0b5; }
.grid { table-layout: fixed; width: 100%; border-collapse: separate; border-spacing: 0; font: 13px/14px "Liberation Mono", monospace; color: #3c3a78; }
.k0 { width: 29px; } .k1 { width: 173px; } .k2 { width: 187px; } .k3 { width: 171px; } .k4 { width: 310px; } .k5 { width: 286px; }
.grid th, .grid td { height: 18px; padding: 3px 1px 0; white-space: pre; overflow: hidden; font-weight: 400; text-align: left; }
.grid td { background: #ffcb99; border-right: 1px solid #7f7f7f; border-bottom: 1px solid #7f7f7f; }
.grid td:nth-child(2) { text-align: right; }
.grid td:last-child { border-right: 0; }
.grid tbody th { font: 13px/16px "Noto Sans", sans-serif; color: #444; text-align: center; padding: 1px 0 0; border-right: 1px solid #aab0b5; border-bottom: 1px solid #d8d8d8; }
.grid thead th { border-bottom: 1px solid #9aa5af; color: #444; padding: 0 0 0 2px; height: 18px; }
.hd { display: flex; justify-content: space-between; align-items: flex-end; height: 17px; }
.flt { width: 17px; height: 16px; margin-right: 1px; flex: none; border: 1px solid #9fb0c0; background: linear-gradient(#fff, #eef2f6); display: grid; place-items: center; }
.flt::after { content: ""; width: 7px; height: 4px; background: #555; clip-path: polygon(0 0, 100% 0, 50% 100%); }
.grid thead .sel { background: #e1e1e1; color: #217346; border-bottom-color: #217346; box-shadow: inset 0 -1px #217346; }
.vscroll { width: 18px; margin-left: 3px; padding: 2px 3px 0 0; display: flex; flex-direction: column; background: #f3f3f3; }
.sb { width: 15px; height: 16px; border: 1px solid #888; background: #fff; display: grid; place-items: center; flex: none; }
.vthumb { height: 17px; border: 1px solid #999; border-top: 0; background: #fff; }
.down { margin-top: auto; }

/* sheet tabs */
.sheetbar { flex: none; display: flex; height: 29px; background: #f5f5f5; color: #444; }
.nav { width: 28px; padding-bottom: 2px; } .nav:first-child { margin-left: 15px; }
.more { font-weight: 700; font-size: 14px; color: #217346; padding-bottom: 5px; }
.stab { display: grid; place-items: center; height: 20px; margin-top: 4px; border-left: 1px solid #aaa; }
.s1 { width: 65px; margin-left: 1px; } .s2 { width: 51px; }
.stab.active { width: 75px; height: 25px; margin-top: 0; padding-top: 3px; background: #fff; color: #217346; font-weight: 700; border: solid #aaa; border-width: 0 1px 2px; border-bottom-color: #217346; }
.s4 { width: 71px; border-left: 0; border-right: 1px solid #aaa; }
.plus { width: 32px; margin: 0 auto 2px 25px; }
.splitter { width: 28px; background: #fff; display: grid; place-items: center; margin-right: 2px; }
.hscroll { width: 506px; margin: 7px 21px 0 0; height: 15px; display: flex; background: #f1f1f1; }
.hscroll .sb { width: 16px; height: 15px; }
.hthumb { width: 258px; border: 1px solid #999; background: #fff; }
.right { margin-left: auto; }

/* status bar */
.status { flex: none; height: 21px; display: flex; align-items: center; background: #217346; color: #fff; font-size: 11px; padding-right: 8px; }
.ready { margin: 0 18px 0 11px; }
.acc { margin: 0 auto 0 2px; }
.view { width: 40px; height: 21px; } .on-view { background: #004b1c; }
.zm { width: 18px; font-size: 16px; }
.zoom { appearance: none; width: 100px; height: 12px; background: linear-gradient(#fff, #fff) center / 100% 1px no-repeat; }
.zoom::-webkit-slider-thumb { appearance: none; width: 5px; height: 11px; background: #fff; }
.pct { margin-left: 8px; }

/* taskbar */
.taskbar { flex: none; height: 40px; display: flex; background: linear-gradient(90deg, #1b1b1b 0, #1f1f1f 28%, #393836 36%, #393836 64%, #1c1c1c 78%); color: #fff; }
.app { width: 49px; display: grid; place-items: center; border-bottom: 2px solid transparent; }
.tv { padding-right: 5px; }
.running { background: linear-gradient(#76b9ed, #76b9ed) center bottom / 40px 2px no-repeat border-box; }
.current { background: #5e5e5e; border-bottom-color: #76b9ed; }
.ic-app { font: 700 11px "Noto Sans", sans-serif; fill: #fff; }
.tray { flex: 1; display: flex; align-items: center; justify-content: flex-end; gap: 8px; padding-right: 24px; }
.t1 { margin-left: 16px; }
.lang { margin: 0 9px; font: 13px "DejaVu Sans", sans-serif; }
.clock { display: flex; flex-direction: column; align-items: center; line-height: 18px; margin-right: 8px; }

/* watermark */
.mark { position: absolute; left: 598px; top: 676px; width: 163px; display: flex; flex-direction: column; align-items: center; opacity: .45; color: #c4c4c4; pointer-events: none; }
.mark-ar { font: 700 46px/50px "DejaVu Sans", sans-serif; }
.mark-en { font: 700 25px/26px "Open Sans", sans-serif; }
```
